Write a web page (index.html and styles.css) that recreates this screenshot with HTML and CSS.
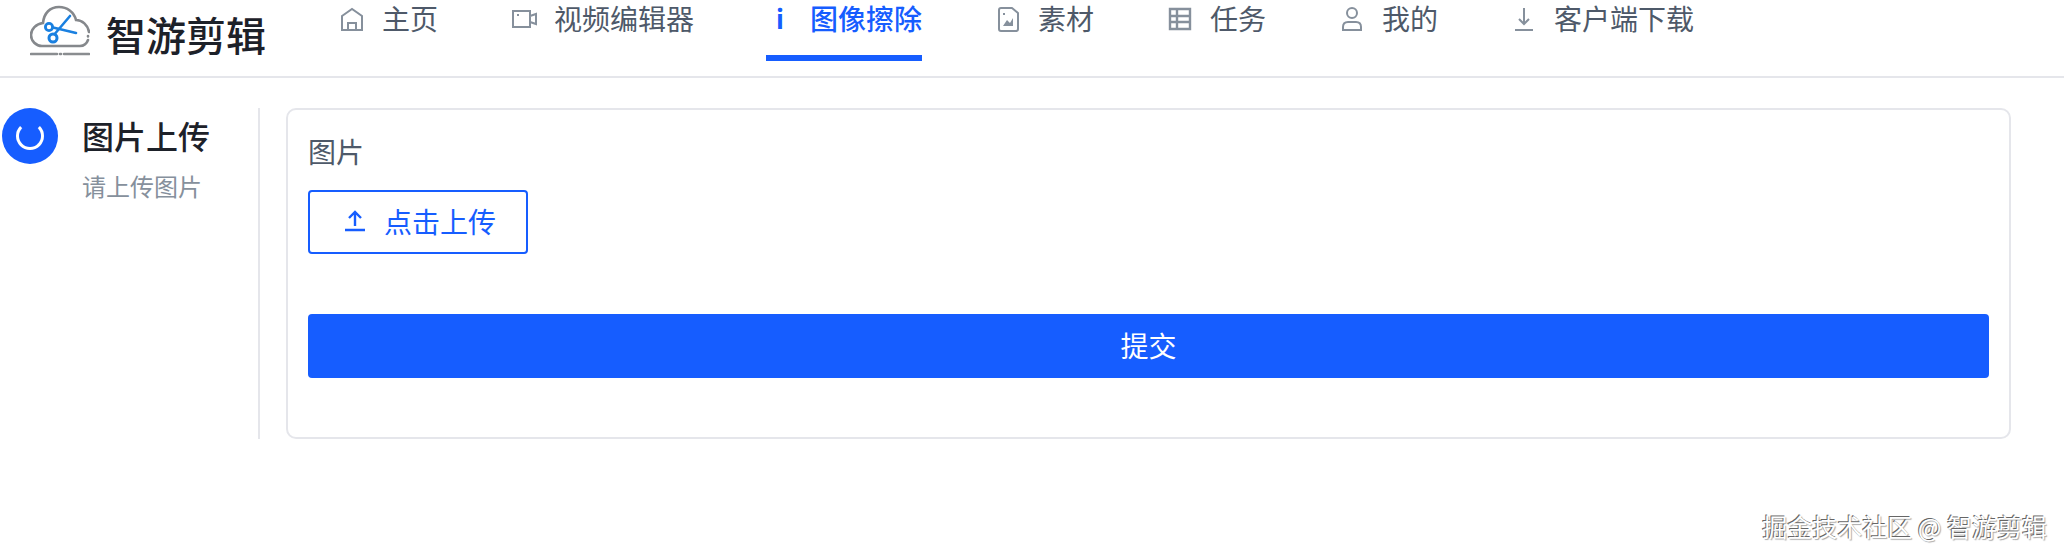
FILE: index.html
```html
<!DOCTYPE html>
<html lang="zh-CN">
<head>
  <meta charset="UTF-8" />
  <title>智游剪辑</title>
  <link rel="stylesheet" href="styles.css">
</head>
<body>
  <header class="topbar">
    <div class="logo">
      <svg class="logo-mark" viewBox="0 0 60 52" width="60" height="52" fill="none">
        <path d="M59 27C58 20 52 15 46 15 44 7 37 2 29 2 20 2 14 8 13 18 6 19 1 24 1 30 1 36 6 41 12 41H50C54 41 57 38 58 35M58 31v.5" stroke="#85888c" stroke-width="2.6" stroke-linecap="round"/>
        <path d="M1 49h26M30 49h1M34 49h25" stroke="#8a8d90" stroke-width="2.6" stroke-linecap="round"/>
        <path d="M23 31 40 11M21 22l25 6" stroke="#1a80e0" stroke-width="2.6" stroke-linecap="round"/>
        <circle cx="19" cy="22" r="3.6" fill="#fff" stroke="#1a80e0" stroke-width="2.8"/>
        <circle cx="23" cy="33" r="4" fill="#fff" stroke="#1a80e0" stroke-width="3"/>
      </svg>
      <span class="logo-name">智游剪辑</span>
    </div>
    <nav class="nav">
      <a class="nav-item">
        <svg class="nav-icon" viewBox="0 0 28 28" fill="none" stroke="currentColor" stroke-width="2"><path d="M4 12 14 5l10 7v14H4zM10 26v-7h8v7"/></svg>
        主页
      </a>
      <a class="nav-item">
        <svg class="nav-icon" viewBox="0 0 28 28" fill="none" stroke="currentColor" stroke-width="2"><path d="M3 7h17v16H3zM20 12l6-2v10l-6-2M7 11h2"/></svg>
        视频编辑器
      </a>
      <a class="nav-item active">
        <span class="nav-icon info">i</span>
        图像擦除
      </a>
      <a class="nav-item">
        <svg class="nav-icon" viewBox="0 0 28 28" fill="none" stroke="currentColor" stroke-width="2"><path d="M7 4h11l6 5v16c0 1-1 2-2 2H7c-1 0-2-1-2-2V6c0-1 1-2 2-2z" stroke-linejoin="round"/><path d="m9 22 4-6 3 3 3-5v8z" fill="currentColor" stroke="none"/><path d="M9 10h2"/></svg>
        素材
      </a>
      <a class="nav-item">
        <svg class="nav-icon" viewBox="0 0 28 28" fill="none" stroke="currentColor" stroke-width="2.4"><path d="M4 5h20v20H4zM4 12h20M4 18h20M11 5v20"/></svg>
        任务
      </a>
      <a class="nav-item">
        <svg class="nav-icon" viewBox="0 0 28 28" fill="none" stroke="currentColor" stroke-width="2"><circle cx="14" cy="9" r="5"/><path d="M5 26v-3c0-3 2-5 5-5h8c3 0 5 2 5 5v3z"/></svg>
        我的
      </a>
      <a class="nav-item">
        <svg class="nav-icon" viewBox="0 0 28 28" fill="none" stroke="currentColor" stroke-width="2"><path d="M14 4v16M9 15l5 5 5-5M5 26h18"/></svg>
        客户端下载
      </a>
    </nav>
  </header>

  <main class="content">
    <aside class="steps">
      <div class="step-circle"><span class="spinner"></span></div>
      <div class="step-text">
        <div class="step-title">图片上传</div>
        <div class="step-desc">请上传图片</div>
      </div>
    </aside>
    <section class="card">
      <div class="field-label">图片</div>
      <button class="upload-btn" type="button">
        <svg class="upload-icon" viewBox="0 0 24 24" fill="none" stroke="currentColor" stroke-width="2.4"><path d="M12 17V3M6 9l6-6 6 6M2 21h20"/></svg>
        点击上传
      </button>
      <button class="submit-btn" type="button">提交</button>
    </section>
  </main>

  <div class="watermark">掘金技术社区 @ 智游剪辑</div>
</body>
</html>
```

FILE: styles.css
```css
* {
  box-sizing: border-box;
}

body {
  margin: 0;
  background: #fff;
  color: #1d2129;
  font-family: "Noto Sans CJK SC", "Noto Sans", sans-serif;
  height: 558px;
  overflow: hidden;
  position: relative;
}

.topbar {
  display: flex;
  align-items: flex-start;
  height: 78px;
  border-bottom: 2px solid #e5e6eb;
}

.logo {
  display: flex;
  align-items: center;
  width: 338px;
  height: 68px;
  padding-left: 30px;
}

.logo-mark {
  align-self: flex-start;
  margin-top: 5px;
  flex: none;
}

.logo-name {
  margin-left: 16px;
  font-size: 40px;
  font-weight: 500;
  line-height: 68px;
}

.nav {
  display: flex;
  gap: 72px;
}

.nav-item {
  display: flex;
  align-items: center;
  gap: 16px;
  height: 61px;
  padding-bottom: 19px;
  border-bottom: 6px solid transparent;
  font-size: 28px;
  line-height: 42px;
  color: #4e5969;
}

.nav-item.active {
  color: #165dff;
  font-weight: 500;
  border-bottom-color: #165dff;
}

.nav-icon {
  width: 28px;
  height: 28px;
  color: #86909c;
  flex: none;
}

.info {
  color: #165dff;
  font-size: 26px;
  font-weight: 700;
  line-height: 28px;
  text-align: center;
}

.content {
  display: flex;
  padding: 30px 53px 0 2px;
}

.steps {
  display: flex;
  width: 258px;
  height: 331px;
  border-right: 2px solid #e5e6eb;
}

.step-circle {
  display: flex;
  align-items: center;
  justify-content: center;
  width: 56px;
  height: 56px;
  border-radius: 50%;
  background: #165dff;
  flex: none;
}

.spinner {
  width: 28px;
  height: 28px;
  border: 3px solid #fff;
  border-top-color: transparent;
  border-radius: 50%;
}

.step-text {
  margin-left: 24px;
}

.step-title {
  font-size: 32px;
  font-weight: 500;
  line-height: 54px;
}

.step-desc {
  margin-top: 6px;
  font-size: 24px;
  line-height: 36px;
  color: #86909c;
}

.card {
  flex: 1;
  height: 331px;
  margin-left: 26px;
  padding: 20px 20px 0;
  border: 2px solid #e5e6eb;
  border-radius: 10px;
}

.field-label {
  font-size: 28px;
  line-height: 42px;
  color: #4e5969;
}

.upload-btn {
  display: flex;
  align-items: center;
  justify-content: center;
  gap: 17px;
  width: 220px;
  height: 64px;
  margin-top: 18px;
  padding: 0 0 2px 3px;
  border: 2px solid #165dff;
  border-radius: 4px;
  background: #fff;
  color: #165dff;
  font-family: inherit;
  font-size: 28px;
}

.upload-icon {
  width: 24px;
  height: 24px;
}

.submit-btn {
  display: block;
  width: 100%;
  height: 64px;
  margin-top: 60px;
  padding: 0 0 2px;
  border: none;
  border-radius: 4px;
  background: #165dff;
  color: #fff;
  font-family: inherit;
  font-size: 28px;
}

.watermark {
  position: absolute;
  right: 17px;
  bottom: 14px;
  font-size: 25px;
  line-height: 36px;
  color: #fff;
  text-shadow: -1px -1px 0 #666, 1px 1px 1px #aaa;
}
```
